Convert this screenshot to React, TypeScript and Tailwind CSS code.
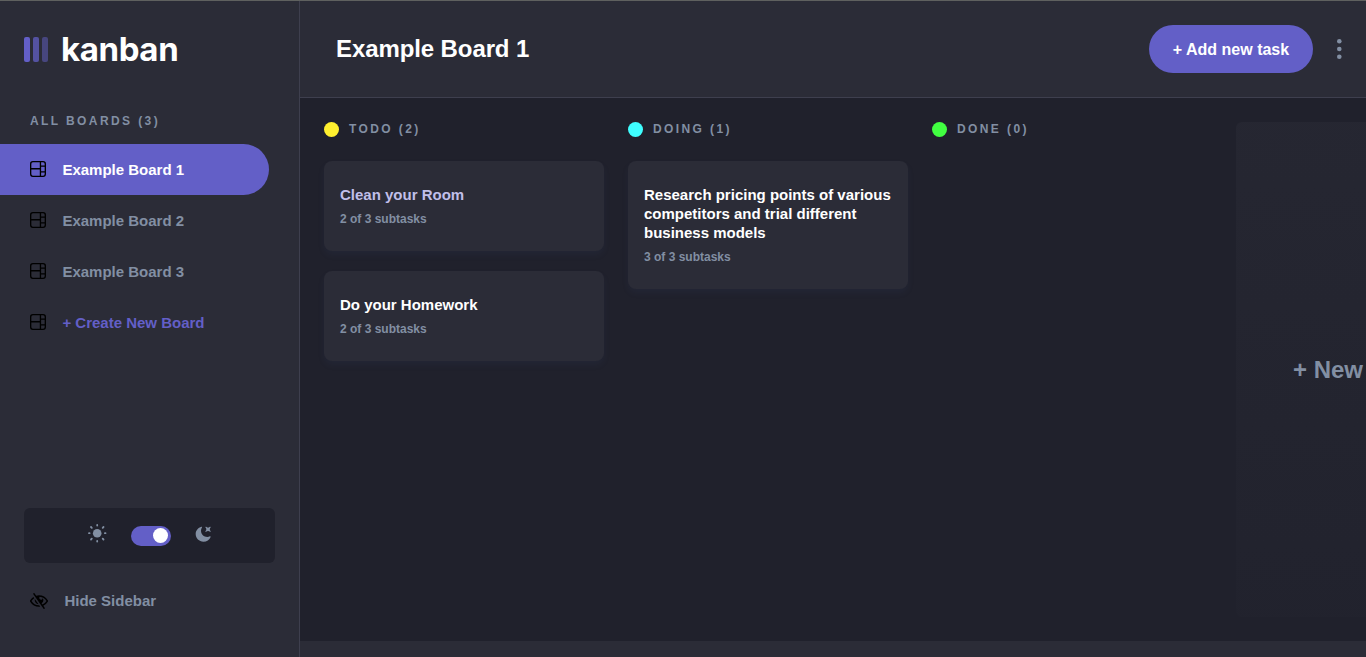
import React from "react";

const BOARD_PATH =
  "M0 2.889A2.889 2.889 0 0 1 2.889 0H13.11A2.889 2.889 0 0 1 16 2.889V13.11A2.888 2.888 0 0 1 13.111 16H2.89A2.889 2.889 0 0 1 0 13.111V2.89Zm1.333 5.555v4.667c0 .859.697 1.556 1.556 1.556h6.889V8.444H1.333Zm8.445-1.333V1.333h-6.89A1.556 1.556 0 0 0 1.334 2.89V7.11h8.445Zm4.889-1.333H11.11v4.444h3.556V5.778Zm0 5.778H11.11v3.11h2a1.556 1.556 0 0 0 1.556-1.555v-1.555Zm0-7.112V2.89a1.555 1.555 0 0 0-1.556-1.556h-2v3.111h3.556Z";

function BoardIcon() {
  return (
    <svg width="16" height="16" className="mb-[2px] shrink-0" fill="#000">
      <path d={BOARD_PATH} />
    </svg>
  );
}

function SunIcon() {
  return (
    <svg width="19" height="19" viewBox="0 0 19 19" className="mb-[5px]">
      <circle cx="9.2" cy="9.2" r="4.3" fill="#828fa3" />
      <g fill="none" stroke="#828fa3" strokeWidth="1.8" strokeLinecap="round">
        <path d="M9.2 1v.6M9.2 16.9v.6M1 9.2h.6M16.9 9.2h.6M3 3l.8.8M14.7 14.7l.8.8M3 15.5l.8-.8M14.7 3.8l.8-.8" />
      </g>
    </svg>
  );
}

function MoonIcon() {
  return (
    <svg width="16" height="16" fill="#828fa3" className="mb-1">
      <path d="M6.474.682c.434-.11.718.406.481.78A6.067 6.067 0 0 0 6.01 4.72c0 3.418 2.827 6.187 6.314 6.187.89.002 1.77-.182 2.584-.54.408-.18.894.165.724.57-1.16 2.775-3.944 4.73-7.194 4.73-4.292 0-7.771-3.41-7.771-7.615 0-3.541 2.466-6.518 5.807-7.37Zm8.433.07c.442-.294.969.232.674.674l-.525.787a1.943 1.943 0 0 0 0 2.157l.525.788c.295.441-.232.968-.674.673l-.787-.525a1.943 1.943 0 0 0-2.157 0l-.786.525c-.442.295-.97-.232-.675-.673l.525-.788a1.943 1.943 0 0 0 0-2.157l-.525-.787c-.295-.442.232-.968.674-.673l.787.525a1.943 1.943 0 0 0 2.157 0Z" />
    </svg>
  );
}

function HideIcon() {
  return (
    <svg width="18" height="16" className="shrink-0" fill="#000">
      <path d="M8.522 11.223a4.252 4.252 0 0 1-3.654-5.22l3.654 5.22ZM9 12.25A8.685 8.685 0 0 1 1.5 8a8.612 8.612 0 0 1 2.76-2.864l-.86-1.23A10.112 10.112 0 0 0 .208 7.238a1.5 1.5 0 0 0 0 1.524A10.187 10.187 0 0 0 9 13.75c.414 0 .828-.025 1.239-.074l-1-1.43A8.88 8.88 0 0 1 9 12.25Zm8.792-3.488a10.14 10.14 0 0 1-4.486 4.046l1.504 2.148a.375.375 0 0 1-.092.523l-.648.453a.375.375 0 0 1-.523-.092L3.19 1.044A.375.375 0 0 1 3.282.52L3.93.068a.375.375 0 0 1 .523.092l1.735 2.479A10.308 10.308 0 0 1 9 2.25c3.746 0 7.031 2 8.792 4.988a1.5 1.5 0 0 1 0 1.524ZM16.5 8a8.674 8.674 0 0 0-6.755-4.219A1.75 1.75 0 1 0 12.75 5v-.001a4.25 4.25 0 0 1-1.154 5.366l.834 1.192A8.641 8.641 0 0 0 16.5 8Z" />
    </svg>
  );
}

const boards = [
  { name: "Example Board 1", style: "rounded-r-full bg-[#635fc7] text-white" },
  { name: "Example Board 2", style: "text-[#828fa3]" },
  { name: "Example Board 3", style: "text-[#828fa3]" },
  { name: "+ Create New Board", style: "text-[#635fc7]" },
];

function Sidebar() {
  return (
    <aside className="flex w-[300px] shrink-0 flex-col border-r border-[#3e3f4e] bg-[#2b2c37]">
      <div className="flex h-[97px] items-center pl-6">
        <div className="flex gap-[3px]">
          <span className="h-[25px] w-1.5 rounded-xs bg-[#635fc7]" />
          <span className="h-[25px] w-1.5 rounded-xs bg-[#635fc7] opacity-75" />
          <span className="h-[25px] w-1.5 rounded-xs bg-[#635fc7] opacity-50" />
        </div>
        <span className="ml-[13px] font-[Inter,sans-serif] text-[33px] leading-none font-bold tracking-[-0.4px] text-white">
          kanban
        </span>
      </div>
      <h2 className="mt-4 pl-[30px] text-[12px] leading-[15px] font-bold tracking-[2.4px] text-[#828fa3]">ALL BOARDS (3)</h2>
      <nav className="mt-[15px] w-[269px]">
        {boards.map((b) => (
          <div key={b.name} className={`flex h-[51px] items-center gap-4 pl-[30px] text-[15px] font-bold ${b.style}`}>
            <BoardIcon />
            <span className="pt-[2px] pl-[0.4px]">{b.name}</span>
          </div>
        ))}
      </nav>
      <div className="mt-auto mr-6 ml-6 flex h-[55px] items-center justify-center gap-6 rounded-md bg-[#20212c]">
        <SunIcon />
        <div className="mt-px flex h-5 w-10 items-center justify-end rounded-full bg-[#635fc7] pr-[3px]">
          <span className="mb-px h-[15px] w-[15px] rounded-full bg-white" />
        </div>
        <MoonIcon />
      </div>
      <div className="mt-[26px] mb-[44px] flex h-6 items-center gap-4 pl-[30px] text-[15px] font-bold text-[#828fa3]">
        <HideIcon />
        <span className="pl-[0.4px]">Hide Sidebar</span>
      </div>
    </aside>
  );
}

function Card({ title, sub, highlighted = false }: { title: string; sub: string; highlighted?: boolean }) {
  return (
    <article className="mb-5 rounded-lg bg-[#2b2c37] px-4 py-6 shadow-[0_4px_6px_rgba(54,78,126,0.1)]">
      <h3 className={`text-[15px] leading-[19px] font-bold ${highlighted ? "text-[#c1bfe9]" : "text-white"}`}>{title}</h3>
      <p className="mt-2 text-[12px] leading-[15px] font-bold text-[#828fa3]">{sub}</p>
    </article>
  );
}

function Column({ label, dot, children }: { label: string; dot: string; children?: React.ReactNode }) {
  return (
    <section className="w-[280px] shrink-0">
      <div className="mb-6 flex h-[15px] items-center gap-[10px]">
        <span className={`h-[15px] w-[15px] rounded-full ${dot}`} />
        <span className="text-[12px] leading-[15px] font-bold tracking-[2.4px] text-[#828fa3]">{label}</span>
      </div>
      {children}
    </section>
  );
}

export default function App() {
  return (
    <div className="flex h-[657px] w-full overflow-hidden border-t border-[#5f615f] bg-[#2b2c37] font-['Liberation_Sans',Arial,sans-serif]">
      <Sidebar />
      <div className="flex min-w-0 flex-1 flex-col">
        <header className="flex h-[97px] shrink-0 items-center border-b border-[#3e3f4e] pr-6 pl-9">
          <h1 className="text-[24px] leading-[30px] font-bold tracking-[-0.1px] text-white">Example Board 1</h1>
          <button className="ml-auto h-12 w-[164px] rounded-full bg-[#635fc7] pt-[2px] text-[16px] font-bold text-white">
            + Add new task
          </button>
          <svg width="5" height="20" className="ml-6 shrink-0" fill="#828fa3">
            <circle cx="2.3" cy="2.3" r="2.3" />
            <circle cx="2.3" cy="10" r="2.3" />
            <circle cx="2.3" cy="17.7" r="2.3" />
          </svg>
        </header>
        <main className="flex h-[543px] gap-6 overflow-hidden bg-[#20212c] p-6">
          <Column label="TODO (2)" dot="bg-[#fff02f]">
            <Card title="Clean your Room" sub="2 of 3 subtasks" highlighted />
            <Card title="Do your Homework" sub="2 of 3 subtasks" />
          </Column>
          <Column label="DOING (1)" dot="bg-[#3ffeff]">
            <Card title="Research pricing points of various competitors and trial different business models" sub="3 of 3 subtasks" />
          </Column>
          <Column label="DONE (0)" dot="bg-[#41ff41]" />
          <div className="flex w-[280px] shrink-0 items-center justify-center rounded-md bg-linear-to-b from-[#2b2c3780] to-[#2b2c3720] text-[24px] font-bold text-[#828fa3]">
            + New Column
          </div>
        </main>
      </div>
    </div>
  );
}
